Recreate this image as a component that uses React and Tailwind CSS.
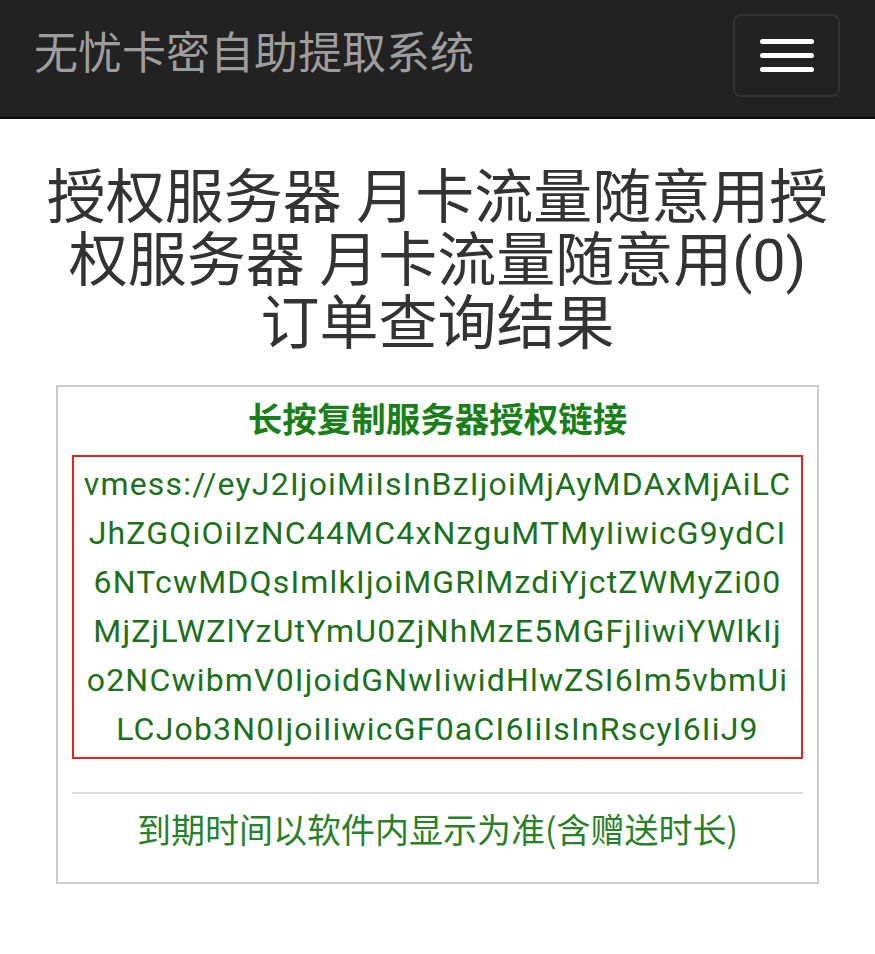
export default function App() {
  const lines = [
    "vmess://eyJ2IjoiMiIsInBzIjoiMjAyMDAxMjAiLC",
    "JhZGQiOiIzNC44MC4xNzguMTMyIiwicG9ydCI",
    "6NTcwMDQsImlkIjoiMGRlMzdiYjctZWMyZi00",
    "MjZjLWZlYzUtYmU0ZjNhMzE5MGFjIiwiYWlkIj",
    "o2NCwibmV0IjoidGNwIiwidHlwZSI6Im5vbmUi",
    "LCJob3N0IjoiIiwicGF0aCI6IiIsInRscyI6IiJ9",
  ];
  return (
    <div className="w-[875px] min-h-[954px] bg-white" style={{ fontFamily: 'Roboto, "Noto Sans CJK SC", sans-serif' }}>
      <div className="h-[119px] bg-[#222222] border-b-2 border-[#080808] flex items-center justify-between pl-[34px] pr-[35px]">
        <div className="text-[44px] text-[#9d9d9d] leading-none pb-[18px]" style={{ fontFamily: '"Noto Sans CJK SC", sans-serif' }}>无忧卡密自助提取系统</div>
        <div className="w-[107px] h-[83px] mb-[7px] border-2 border-[#333333] rounded-[8px] flex flex-col items-center justify-center gap-[9px]">
          <div className="w-[54px] h-[5px] rounded-[3px] bg-white" />
          <div className="w-[54px] h-[5px] rounded-[3px] bg-white" />
          <div className="w-[54px] h-[5px] rounded-[3px] bg-white" />
        </div>
      </div>
      <div className="pt-[47px] px-[30px] text-center text-[#333333] text-[59px] leading-[63px]" style={{ fontFamily: 'Roboto, "Noto Sans CJK SC", sans-serif' }}>
        授权服务器 月卡流量随意用授权服务器 月卡流量随意用(0)<br />订单查询结果
      </div>
      <div className="mx-[56px] mt-[30px] h-[499px] border-2 border-[#cccccc] px-[14px] pt-[6px]">
        <div className="text-center text-[34.5px] font-bold text-[#1a7f1a] leading-[48px]" style={{ fontFamily: '"Noto Sans CJK SC", sans-serif' }}>长按复制服务器授权链接</div>
        <div className="mt-[14px] border-2 border-[#e52222] py-[3px] text-center text-[#1d6f1d] text-[32px] leading-[49px] tracking-[1.2px]">
          {lines.map((l, i) => (
            <div key={i}>{l}</div>
          ))}
        </div>
        <div className="mt-[33px] h-[2px] bg-[#dddddd]" />
        <div className="mt-[13px] text-center text-[34px] text-[#2a7f2a] leading-[44px]" style={{ fontFamily: '"Noto Sans CJK SC", sans-serif' }}>到期时间以软件内显示为准(含赠送时长)</div>
      </div>
    </div>
  );
}
